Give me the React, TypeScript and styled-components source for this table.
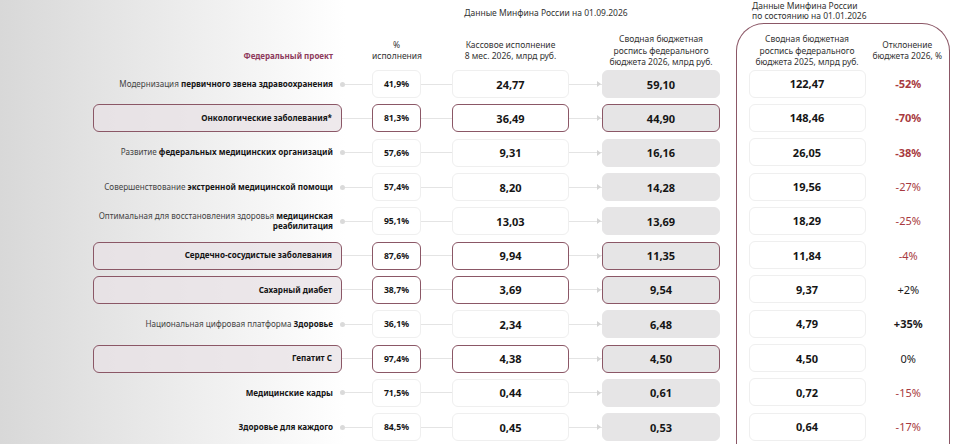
import styled, { createGlobalStyle, css } from "styled-components";

const GlobalStyle = createGlobalStyle`
  html, body { margin: 0; padding: 0; }
  body {
    font-family: "Noto Sans", "DejaVu Sans", sans-serif;
    color: #222;
  }
`;

const MAROON = "#8b5766";
const RED = "#a83a40";
const COLS = "249px 30px 49px 31px 117px 33px 118px 16px";
const ROW_H = 34.3;

const Page = styled.div`
  width: 960px;
  height: 444px;
  overflow: hidden;
  display: flex;
  background: linear-gradient(90deg, #d8d8d8 0%, #e7e7e7 14%, #f6f6f6 28%, #ffffff 36%);
`;

const Left = styled.div`
  width: 736px;
  padding-left: 93px;
  box-sizing: border-box;
  display: flex;
  flex-direction: column;
`;

const Grid = styled.div<{ $h: number }>`
  display: grid;
  grid-template-columns: ${COLS};
  height: ${(p) => p.$h}px;
  align-items: center;
  flex-shrink: 0;
`;

const Caption = styled.div`
  grid-column: 3 / 8;
  text-align: center;
  font-size: 8.5px;
  color: #333;
`;

const HeadCell = styled.div<{ $col?: string }>`
  grid-column: ${(p) => p.$col || "auto"};
  text-align: center;
  font-size: 8.5px;
  line-height: 11.5px;
  color: #333;
  padding-top: 9px;
`;

const ProjectHead = styled.div`
  text-align: right;
  padding: 19px 9px 0 0;
  font-size: 8px;
  font-weight: 700;
  color: #8e3a5c;
`;

const Label = styled.div<{ $hl?: boolean }>`
  height: 28px;
  box-sizing: border-box;
  display: flex;
  align-items: center;
  justify-content: flex-end;
  text-align: right;
  white-space: nowrap;
  padding-right: 9px;
  font-size: 8.1px;
  line-height: 10.5px;
  color: #444;
  b {
    font-weight: 700;
    color: #151515;
  }
  ${(p) =>
    p.$hl &&
    css`
      border: 1.5px solid ${MAROON};
      border-radius: 6px;
      background: rgba(232, 226, 229, 0.75);
      font-weight: 700;
      color: #151515;
    `}
`;

const Connector = styled.div<{ $dot?: boolean; $arrow?: boolean }>`
  position: relative;
  height: 1px;
  background: #e4e4e4;
  ${(p) =>
    p.$dot &&
    css`
      &::before {
        content: "";
        position: absolute;
        left: -2px;
        top: -2px;
        width: 5px;
        height: 5px;
        border-radius: 50%;
        background: #dadada;
      }
    `}
  ${(p) =>
    p.$arrow &&
    css`
      &::after {
        content: "";
        position: absolute;
        right: 1px;
        top: -2.5px;
        border-left: 4px solid #d4d4d4;
        border-top: 3px solid transparent;
        border-bottom: 3px solid transparent;
      }
    `}
`;

const Box = styled.div<{ $hl?: boolean; $grey?: boolean; $small?: boolean }>`
  height: 28px;
  box-sizing: border-box;
  display: flex;
  align-items: center;
  justify-content: center;
  border-radius: 6px;
  border: 1px solid ${(p) => (p.$grey ? "#e6e5e6" : "#efefef")};
  background: ${(p) => (p.$grey ? "#e6e5e6" : "#ffffff")};
  font-weight: 700;
  font-size: ${(p) => (p.$small ? "8.7px" : "11px")};
  color: #151515;
  ${(p) =>
    p.$hl &&
    css`
      border: 1.5px solid ${MAROON};
    `}
`;

const Right = styled.div`
  width: 214px;
  display: flex;
  flex-direction: column;
`;

const RightCaption = styled.div`
  height: 23px;
  flex-shrink: 0;
  box-sizing: border-box;
  padding: 1px 0 0 16px;
  font-size: 8.5px;
  line-height: 10px;
  color: #333;
`;

const Panel = styled.div`
  flex: 1;
  border: 1.5px solid ${MAROON};
  border-bottom: none;
  border-radius: 28px 28px 0 0;
  padding-left: 11.5px;
  display: flex;
  flex-direction: column;
`;

const PanelGrid = styled.div<{ $h: number }>`
  display: grid;
  grid-template-columns: 117px 1fr;
  height: ${(p) => p.$h}px;
  align-items: center;
  flex-shrink: 0;
`;

const Deviation = styled.div<{ $red?: boolean; $bold?: boolean }>`
  text-align: center;
  padding-left: 2px;
  font-size: 11px;
  font-weight: ${(p) => (p.$bold ? 700 : 400)};
  color: ${(p) => (p.$red ? RED : "#1a1a1a")};
`;

interface IRow {
  label: React.ReactNode;
  hl?: boolean;
  pct: string;
  kass: string;
  svod: string;
  prev: string;
  dev: string;
  red?: boolean;
  bold?: boolean;
}

const rows: IRow[] = [
  { label: <>Модернизация <b>первичного звена здравоохранения</b></>, pct: "41,9%", kass: "24,77", svod: "59,10", prev: "122,47", dev: "-52%", red: true, bold: true },
  { label: "Онкологические заболевания*", hl: true, pct: "81,3%", kass: "36,49", svod: "44,90", prev: "148,46", dev: "-70%", red: true, bold: true },
  { label: <>Развитие <b>федеральных медицинских организаций</b></>, pct: "57,6%", kass: "9,31", svod: "16,16", prev: "26,05", dev: "-38%", red: true, bold: true },
  { label: <>Совершенствование <b>экстренной медицинской помощи</b></>, pct: "57,4%", kass: "8,20", svod: "14,28", prev: "19,56", dev: "-27%", red: true },
  { label: <>Оптимальная для восстановления здоровья <b>медицинская</b><br /><b>реабилитация</b></>, pct: "95,1%", kass: "13,03", svod: "13,69", prev: "18,29", dev: "-25%", red: true },
  { label: "Сердечно-сосудистые заболевания", hl: true, pct: "87,6%", kass: "9,94", svod: "11,35", prev: "11,84", dev: "-4%", red: true },
  { label: "Сахарный диабет", hl: true, pct: "38,7%", kass: "3,69", svod: "9,54", prev: "9,37", dev: "+2%" },
  { label: <>Национальная цифровая платформа <b>Здоровье</b></>, pct: "36,1%", kass: "2,34", svod: "6,48", prev: "4,79", dev: "+35%", bold: true },
  { label: "Гепатит С", hl: true, pct: "97,4%", kass: "4,38", svod: "4,50", prev: "4,50", dev: "0%" },
  { label: <b>Медицинские кадры</b>, pct: "71,5%", kass: "0,44", svod: "0,61", prev: "0,72", dev: "-15%", red: true },
  { label: <b>Здоровье для каждого</b>, pct: "84,5%", kass: "0,45", svod: "0,53", prev: "0,64", dev: "-17%", red: true },
];

const App = () => {
  return (
    <>
      <GlobalStyle />
      <Page>
        <Left>
          <Grid $h={24}>
            <Caption>Данные Минфина России на 01.09.2026</Caption>
          </Grid>
          <Grid $h={43}>
            <ProjectHead>Федеральный проект</ProjectHead>
            <HeadCell $col="3">
              %<br />исполнения
            </HeadCell>
            <HeadCell $col="5">
              Кассовое исполнение
              <br />8 мес. 2026, млрд руб.
            </HeadCell>
            <HeadCell $col="7">
              Сводная бюджетная
              <br />
              роспись федерального
              <br />
              бюджета 2026, млрд руб.
            </HeadCell>
          </Grid>
          {rows.map((r, i) => (
            <Grid $h={ROW_H} key={i}>
              <Label $hl={r.hl}>
                <span>{r.label}</span>
              </Label>
              <Connector $dot={!r.hl} />
              <Box $small $hl={r.hl}>
                {r.pct}
              </Box>
              <Connector />
              <Box $hl={r.hl}>{r.kass}</Box>
              <Connector $arrow />
              <Box $grey $hl={r.hl}>
                {r.svod}
              </Box>
            </Grid>
          ))}
        </Left>
        <Right>
          <RightCaption>
            Данные Минфина России
            <br />
            по состоянию на 01.01.2026
          </RightCaption>
          <Panel>
            <PanelGrid $h={42.5}>
              <HeadCell>
                Сводная бюджетная
                <br />
                роспись федерального
                <br />
                бюджета 2025, млрд руб.
              </HeadCell>
              <HeadCell>
                Отклонение
                <br />
                бюджета 2026, %
              </HeadCell>
            </PanelGrid>
            {rows.map((r, i) => (
              <PanelGrid $h={ROW_H} key={i}>
                <Box>{r.prev}</Box>
                <Deviation $red={r.red} $bold={r.bold}>
                  {r.dev}
                </Deviation>
              </PanelGrid>
            ))}
          </Panel>
        </Right>
      </Page>
    </>
  );
};

export default App;
